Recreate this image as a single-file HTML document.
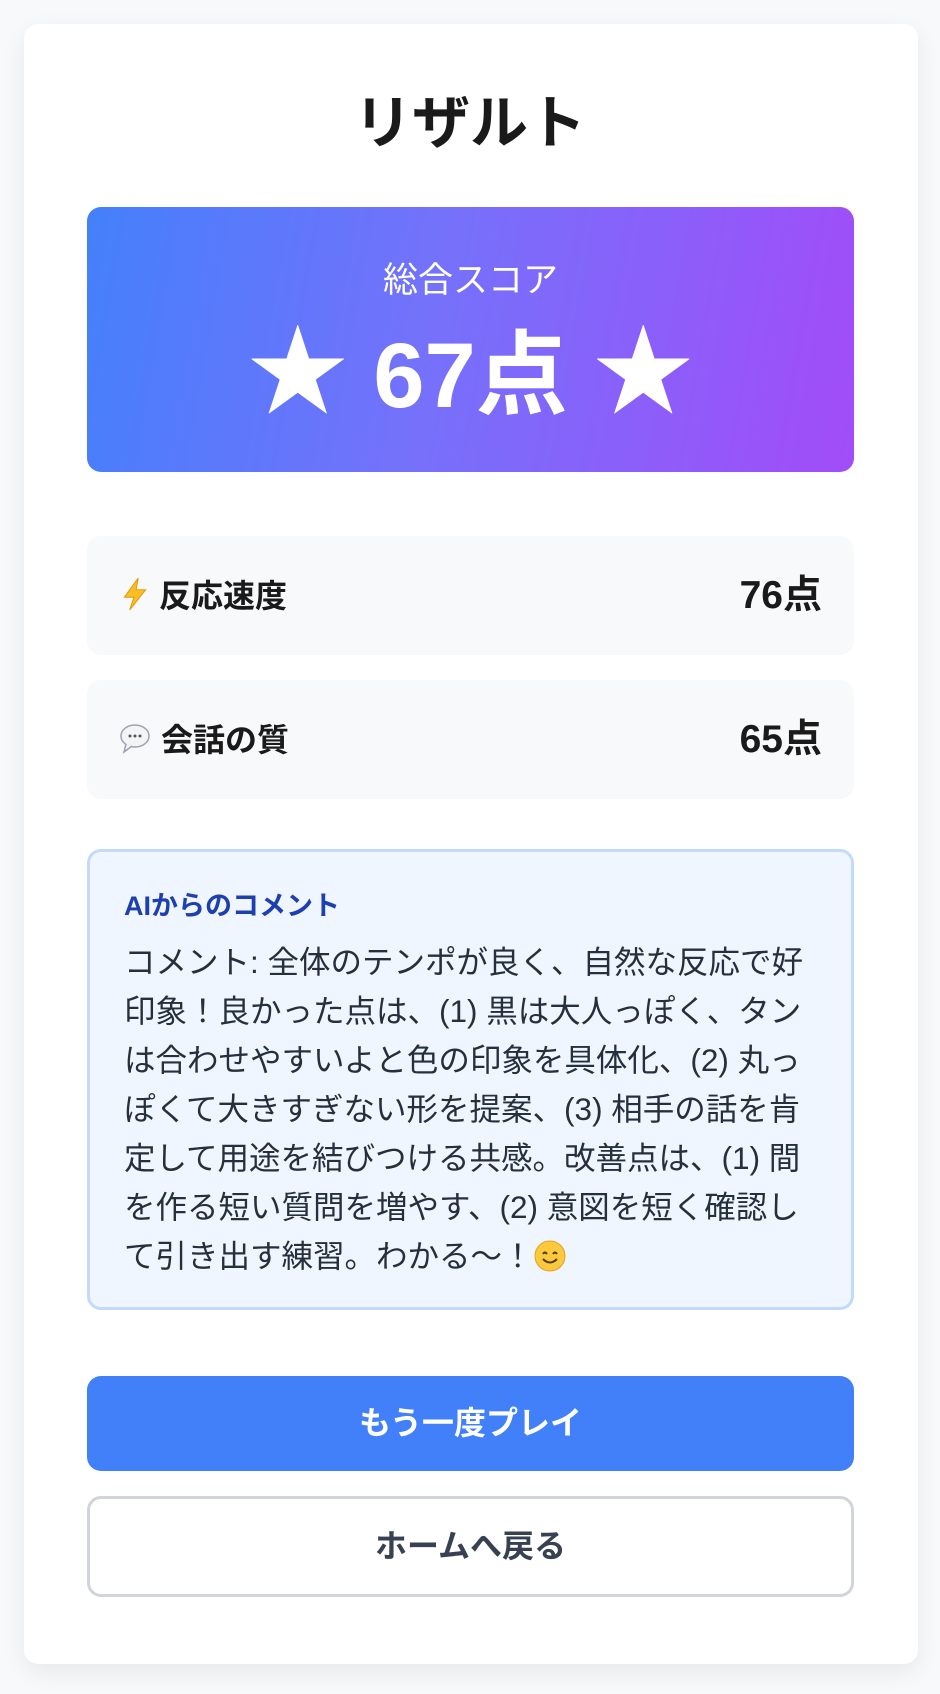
<!DOCTYPE html>
<html><head><meta charset="utf-8"><style>
*{box-sizing:border-box;margin:0;padding:0}
body{width:940px;height:1694px;background:#f8f9fb;font-family:"Liberation Sans","Noto Sans CJK JP",sans-serif;color:#1a1a1a;position:relative;overflow:hidden}
.card{position:absolute;left:24px;top:24px;width:894px;height:1640px;background:#fff;border-radius:14px;box-shadow:0 8px 24px rgba(0,0,0,.07)}
.abs{position:absolute}
h1{position:absolute;left:0;width:940px;top:84px;text-align:center;font-size:58px;font-weight:bold;line-height:80px;color:#1a1a1a}
.grad{left:87px;top:207px;width:767px;height:265px;border-radius:14px;background:linear-gradient(100deg,#4480fb 0%,#7571fb 45%,#a24cf8 100%);color:#fff;text-align:center}
.row{left:87px;width:767px;height:119px;background:#f8f9fb;border-radius:14px}
.row .t{position:absolute;left:34px;top:-2px;font-size:32px;font-weight:bold;display:flex;align-items:center;gap:10px;height:119px}
.row .s{position:absolute;right:32px;top:0;line-height:119px;font-size:39px;font-weight:bold}
.cm{left:87px;top:849px;width:767px;height:461px;background:#eff6ff;border:3px solid #c3dafd;border-radius:14px}
.cm .h{position:absolute;left:34px;top:34px;font-size:27px;font-weight:bold;color:#1e40af;line-height:40px}
.cm .b{position:absolute;left:34px;top:86px;width:720px;font-size:31.5px;line-height:49px;color:#26303d;white-space:nowrap}
.btn{left:87px;width:767px;border-radius:14px;text-align:center;font-size:32px;font-weight:bold}
</style></head><body>
<div class="card"></div>
<h1>リザルト</h1>
<div class="abs grad">
<div style="position:absolute;left:0;right:0;top:52px;font-size:35px;line-height:44px">総合スコア</div>
<div style="position:absolute;left:0;right:0;top:108px;font-size:92px;font-weight:bold;line-height:116px"><span style="font-size:100px">★</span> 67点 <span style="font-size:100px">★</span></div>
</div>
<div class="abs row" style="top:536px"><div class="t"><svg width="28" height="34" viewBox="0 0 26 32"><path d="M16 1 L3 19 H12 L8 31 L23 12 H14 Z" fill="#fbbf24" stroke="#e59a12" stroke-width="1"/></svg>反応速度</div><div class="s">76点</div></div>
<div class="abs row" style="top:680px"><div class="t" style="left:32px"><svg width="32" height="32" viewBox="0 0 32 32"><ellipse cx="16" cy="14" rx="14" ry="11" fill="#f3f4f6" stroke="#9ca3af" stroke-width="1.5"/><path d="M7 22 L5 30 L13 24" fill="#f3f4f6" stroke="#9ca3af" stroke-width="1.5"/><circle cx="11" cy="14" r="1.5" fill="#555"/><circle cx="16" cy="14" r="1.5" fill="#555"/><circle cx="21" cy="14" r="1.5" fill="#555"/></svg>会話の質</div><div class="s">65点</div></div>
<div class="abs cm">
<div class="h">AIからのコメント</div>
<div class="b">コメント: 全体のテンポが良く、自然な反応で好<br>印象！良かった点は、(1) 黒は大人っぽく、タン<br>は合わせやすいよと色の印象を具体化、(2) 丸っ<br>ぽくて大きすぎない形を提案、(3) 相手の話を肯<br>定して用途を結びつける共感。改善点は、(1) 間<br>を作る短い質問を増やす、(2) 意図を短く確認し<br>て引き出す練習。わかる〜！<svg width="32" height="32" viewBox="0 0 32 32" style="vertical-align:-5px"><circle cx="16" cy="16" r="15" fill="#fbc93d" stroke="#e8a020"/><path d="M9 14 Q11 11 13 14 M19 14 Q21 11 23 14" stroke="#5a3a10" stroke-width="2" fill="none"/><path d="M9 19 Q16 26 23 19" stroke="#5a3a10" stroke-width="2" fill="none"/></svg></div>
</div>
<div class="abs btn" style="top:1376px;height:95px;line-height:95px;background:#4180f8;color:#fff">もう一度プレイ</div>
<div class="abs btn" style="top:1496px;height:101px;line-height:95px;background:#fff;border:3px solid #d1d5db;color:#374151">ホームへ戻る</div>
</body></html>
